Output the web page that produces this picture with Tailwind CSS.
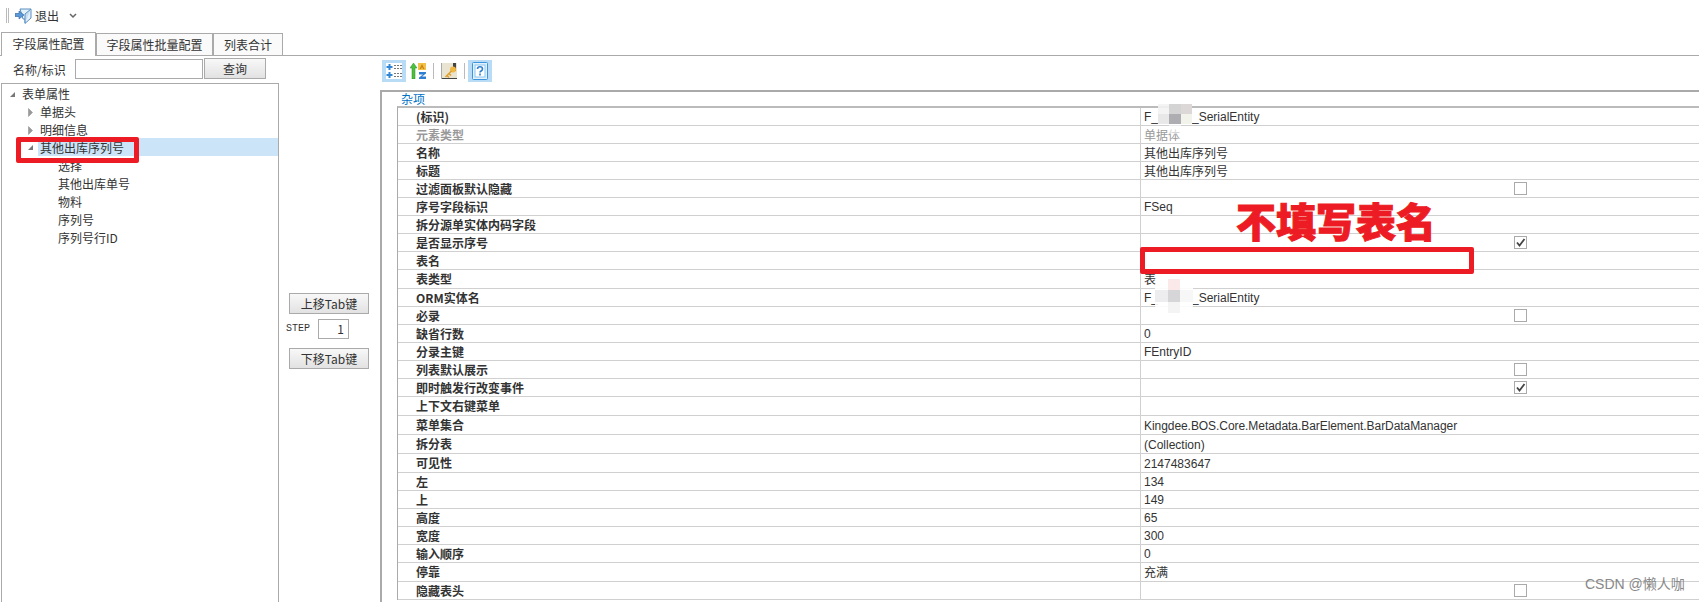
<!DOCTYPE html>
<html lang="zh">
<head>
<meta charset="utf-8">
<script src="https://cdn.jsdelivr.net/npm/@tailwindcss/browser@4"></script>
</head>
<body class="bg-white overflow-hidden">
<div class="relative w-[1699px] h-[602px] overflow-hidden bg-white text-[12px] leading-[18px] text-[#333] font-['Noto_Sans_CJK_SC','Noto_Sans',sans-serif]">

  <!-- top toolbar -->
  <div class="h-[32px] flex items-center pl-[6px] pb-[1px] gap-[4px]">
    <div class="w-[3px] h-[15px] border-x border-[#bbb]"></div>
    <svg class="w-[17px] h-[16px] ml-[2px] mr-[-1px]" viewBox="0 0 17 16">
      <path d="M5 1h11v9l-6 5.500V11H8z" fill="#e4f0fa" stroke="#5b8fc0"/>
      <path d="M10 15V6l6-5" fill="#c5ddf2" stroke="#5b8fc0"/>
      <path d="M0 5.500h4V3l5 4-5 4V8.500H0z" fill="#5a9ad8" stroke="#2c5f9b" stroke-width=".6"/>
    </svg>
    <span class="text-[12px] text-[#333]">退出</span>
    <svg class="w-[8px] h-[6px] ml-[6px]" viewBox="0 0 8 6"><path d="M1 1l3 3 3-3" fill="none" stroke="#666" stroke-width="1.5"/></svg>
  </div>

  <!-- tab strip -->
  <div class="h-[24px] flex items-end border-b border-[#aaa] pl-[1px] relative">
    <div class="w-[95px] h-[24px] border border-b-0 border-[#aaa] bg-white text-center leading-[22px] relative top-[1px] z-10">字段属性配置</div>
    <div class="w-[117px] h-[22px] border border-b-0 border-[#aaa] bg-[#fafafa] text-center leading-[22px]">字段属性批量配置</div>
    <div class="w-[70px] h-[22px] border border-b-0 border-[#aaa] bg-[#fafafa] text-center leading-[22px]">列表合计</div>
  </div>

  <div class="flex h-[546px]">
    <!-- left panel -->
    <div class="w-[279px] shrink-0 flex flex-col">
      <div class="h-[27px] flex items-start pt-[4px]">
        <span class="ml-[13px] w-[62px] leading-[20px]">名称/标识</span>
        <div class="w-[128px] h-[20px] border border-[#aaa] -mt-[1px]"></div>
        <div class="w-[62px] h-[21px] border border-[#aaa] bg-gradient-to-b from-[#f8f8f8] to-[#e2e2e2] text-center leading-[19px] ml-[1px] -mt-[2px]">查询</div>
      </div>
      <div class="flex-1 ml-[1px] border border-[#aaa] border-b-0 pt-[1px] relative">
        <div class="h-[18px] flex items-center pl-[7px] gap-[6px]">
          <svg class="w-[7px] h-[7px]" viewBox="0 0 7 7"><path d="M6 1v5H1z" fill="#777"/></svg><span>表单属性</span>
        </div>
        <div class="h-[18px] flex items-center pl-[26px] gap-[7px]">
          <svg class="w-[5px] h-[9px]" viewBox="0 0 5 9"><path d="M.5.5l4 4-4 4z" fill="#999" stroke="#888" stroke-width=".5"/></svg><span>单据头</span>
        </div>
        <div class="h-[18px] flex items-center pl-[26px] gap-[7px]">
          <svg class="w-[5px] h-[9px]" viewBox="0 0 5 9"><path d="M.5.5l4 4-4 4z" fill="#999" stroke="#888" stroke-width=".5"/></svg><span>明细信息</span>
        </div>
        <div class="h-[18px] -mt-[1px] mb-[1px] flex items-center pl-[25px]">
          <svg class="w-[7px] h-[7px] mr-[4px]" viewBox="0 0 7 7"><path d="M6 1v5H1z" fill="#777"/></svg><span class="bg-[#cce4f7] flex-1 pl-[2px] h-[18px] leading-[20px]">其他出库序列号</span>
        </div>
        <div class="h-[18px] pl-[56px]">选择</div>
        <div class="h-[18px] pl-[56px]">其他出库单号</div>
        <div class="h-[18px] pl-[56px]">物料</div>
        <div class="h-[18px] pl-[56px]">序列号</div>
        <div class="h-[18px] pl-[56px]">序列号行ID</div>
        <!-- red annotation -->
        <div class="absolute left-[14px] top-[53px] w-[123px] h-[26px] border-[5px] border-[#ed1c24] rounded-[2px]"></div>
      </div>
    </div>

    <!-- middle column -->
    <div class="w-[101px] shrink-0 flex flex-col items-start pt-[237px] pl-[10px]">
      <div class="w-[80px] h-[21px] border border-[#aaa] bg-gradient-to-b from-[#f8f8f8] to-[#e2e2e2] text-center leading-[19px]">上移Tab键</div>
      <div class="flex items-start pt-[5px] h-[34px] w-[80px]">
        <span class="w-[32px] -ml-[3px] font-['Liberation_Mono',monospace] text-[10px] leading-[20px]">STEP</span>
        <div class="w-[31px] h-[20px] border border-[#aaa] text-right pr-[4px] leading-[18px]">1</div>
      </div>
      <div class="w-[80px] h-[21px] border border-[#aaa] bg-gradient-to-b from-[#f8f8f8] to-[#e2e2e2] text-center leading-[19px]">下移Tab键</div>
    </div>

    <!-- right panel -->
    <div class="flex-1 flex flex-col min-w-0">
      <div class="h-[34px] flex items-center pt-[1px] pb-[5px]">
        <div class="w-[24px] h-[22px] ml-[2px] bg-[#b8dcf5] flex items-center justify-center">
          <svg class="w-[16px] h-[16px]" viewBox="0 0 16 16">
            <rect x="0" y="0" width="16" height="16" fill="#fff"/>
            <path d="M3.500 1v6M.5 4h6M3.500 9v6M.5 12h6" stroke="#2f86d6" stroke-width="2"/>
            <path d="M8 2.500h8M8 5.500h8M8 10.500h8M8 13.500h8" stroke="#777" stroke-dasharray="2 1"/>
          </svg>
        </div>
        <svg class="w-[16px] h-[16px] ml-[4px]" viewBox="0 0 16 16">
          <path d="M3.500 0L7 5H5v11H2V5H0z" fill="#4cc13c" stroke="#2a8a2a" stroke-width=".5"/>
          <rect x="8" y="0" width="8" height="7" fill="#f2c14a"/>
          <path d="M12 1l-2.500 5h1.500l1-2 1 2h1.500z" fill="#c98512"/>
          <path d="M9 9h7v1.500l-4 3h4V16H9v-1.500l4-3H9z" fill="#2f7fd0"/>
        </svg>
        <div class="w-px h-[16px] bg-[#bbb] ml-[7px]"></div>
        <svg class="w-[16px] h-[16px] ml-[7px]" viewBox="0 0 16 16">
          <rect x="0" y="0" width="16" height="16" fill="#e9e4d2"/>
          <path d="M0 15.500h16" stroke="#444"/>
          <path d="M.5 0v16" stroke="#aaa"/>
          <rect x="12" y="0" width="3" height="8" fill="#444"/>
          <circle cx="12" cy="6.500" r="3" fill="#f0b840"/>
          <path d="M10.500 8l-6 6M6 12.500l2 2M8 10.500l2 2" stroke="#e0a030" stroke-width="1.600" fill="none"/>
        </svg>
        <div class="w-px h-[16px] bg-[#bbb] ml-[7px]"></div>
        <div class="w-[24px] h-[22px] bg-[#b8dcf5] ml-[3px] flex items-center justify-center">
          <svg class="w-[16px] h-[18px]" viewBox="0 0 16 18">
            <rect x=".5" y=".5" width="15" height="17" rx="1" fill="#e2f1fc" stroke="#3d93dc"/>
            <rect x="3" y="3" width="10" height="12" fill="#fff" stroke="#8cc4ee"/>
            <path d="M5.500 7c0-3 5-3 5 0 0 2-2.500 2-2.500 3.500" fill="none" stroke="#2f7fd0" stroke-width="1.600"/>
            <path d="M8 11.500v2" stroke="#2f7fd0" stroke-width="1.600"/>
          </svg>
        </div>
      </div>

      <div class="flex-1 border-l-2 border-t-2 border-[#aaa] flex flex-col">
        <div class="h-[14px] pl-[19px] text-[#0072c6] leading-[14px] shrink-0">杂项</div>
        <div class="ml-[15px] border-l border-t-2 border-[#bbb] border-l-[#aaa]">
          <!-- rows -->
          <div class="grid grid-cols-[742px_1fr] h-[18px] border-b border-[#d0d0d0]"><div class="pl-[18px] font-bold leading-[17px]">(标识)</div><div class="border-l border-[#d0d0d0] pl-[3px] leading-[19px] font-['Liberation_Sans','Noto_Sans_CJK_SC',sans-serif] relative">F_<span class="inline-block w-[34px]"></span>_SerialEntity<div class="absolute z-10 left-[17px] -top-[4px] w-[34px] h-[30px] grid grid-cols-3 grid-rows-3"><span class="bg-[#f3f3f3]/90"></span><span class="bg-[#d4d4d4]"></span><span class="bg-[#dcd8d8]"></span><span class="bg-[#e8e8e8]"></span><span class="bg-[#aeaeb2]"></span><span class="bg-[#f2f4ec]"></span><span></span><span class="bg-white/60"></span><span></span></div></div></div>
          <div class="grid grid-cols-[742px_1fr] h-[18px] border-b border-[#d0d0d0]"><div class="pl-[18px] font-bold leading-[17px] text-[#999]">元素类型</div><div class="border-l border-[#d0d0d0] pl-[3px] leading-[17px] text-[#999]">单据体</div></div>
          <div class="grid grid-cols-[742px_1fr] h-[18px] border-b border-[#d0d0d0]"><div class="pl-[18px] font-bold leading-[17px]">名称</div><div class="border-l border-[#d0d0d0] pl-[3px] leading-[17px]">其他出库序列号</div></div>
          <div class="grid grid-cols-[742px_1fr] h-[18px] border-b border-[#d0d0d0]"><div class="pl-[18px] font-bold leading-[17px]">标题</div><div class="border-l border-[#d0d0d0] pl-[3px] leading-[17px]">其他出库序列号</div></div>
          <div class="grid grid-cols-[742px_1fr] h-[18px] border-b border-[#d0d0d0]"><div class="pl-[18px] font-bold leading-[17px]">过滤面板默认隐藏</div><div class="border-l border-[#d0d0d0] pl-[373px] pt-[2px]"><div class="w-[13px] h-[13px] border border-[#aaa]"></div></div></div>
          <div class="grid grid-cols-[742px_1fr] h-[18px] border-b border-[#d0d0d0]"><div class="pl-[18px] font-bold leading-[17px]">序号字段标识</div><div class="border-l border-[#d0d0d0] pl-[3px] leading-[19px] font-['Liberation_Sans',sans-serif]">FSeq</div></div>
          <div class="grid grid-cols-[742px_1fr] h-[18px] border-b border-[#d0d0d0]"><div class="pl-[18px] font-bold leading-[17px]">拆分源单实体内码字段</div><div class="border-l border-[#d0d0d0]"></div></div>
          <div class="grid grid-cols-[742px_1fr] h-[18px] border-b border-[#d0d0d0]"><div class="pl-[18px] font-bold leading-[17px]">是否显示序号</div><div class="border-l border-[#d0d0d0] pl-[373px] pt-[2px]"><div class="w-[13px] h-[13px] border border-[#aaa] flex items-center justify-center"><svg class="w-[11px] h-[11px]" viewBox="0 0 11 11"><path d="M2 5.500l2.500 3L9.500 2" fill="none" stroke="#444" stroke-width="1.800"/></svg></div></div></div>
          <div class="grid grid-cols-[742px_1fr] h-[18px] border-b border-[#d0d0d0]"><div class="pl-[18px] font-bold leading-[17px]">表名</div><div class="border-l border-[#d0d0d0]"></div></div>
          <div class="grid grid-cols-[742px_1fr] h-[19px] border-b border-[#d0d0d0]"><div class="pl-[18px] font-bold leading-[17px]">表类型</div><div class="border-l border-[#d0d0d0] pl-[3px] leading-[17px]">表</div></div>
          <div class="grid grid-cols-[742px_1fr] h-[18px] border-b border-[#d0d0d0]"><div class="pl-[18px] font-bold leading-[17px]">ORM实体名</div><div class="border-l border-[#d0d0d0] pl-[3px] leading-[19px] font-['Liberation_Sans','Noto_Sans_CJK_SC',sans-serif] relative">F_<span class="inline-block w-[34px]"></span>_SerialEntity<div class="absolute z-10 left-[14px] -top-[10px] w-[38px] h-[34px] grid grid-cols-3 grid-rows-3 rounded-[8px] overflow-hidden"><span class="bg-white/90"></span><span class="bg-[#fbe9e9]"></span><span class="bg-white/90"></span><span class="bg-[#ededf0]"></span><span class="bg-[#d6d6d8]"></span><span class="bg-[#f7f7f7]"></span><span class="bg-white/90"></span><span class="bg-[#f4f4f4]"></span><span class="bg-white/90"></span></div></div></div>
          <div class="grid grid-cols-[742px_1fr] h-[18px] border-b border-[#d0d0d0]"><div class="pl-[18px] font-bold leading-[17px]">必录</div><div class="border-l border-[#d0d0d0] pl-[373px] pt-[2px]"><div class="w-[13px] h-[13px] border border-[#aaa]"></div></div></div>
          <div class="grid grid-cols-[742px_1fr] h-[18px] border-b border-[#d0d0d0]"><div class="pl-[18px] font-bold leading-[17px]">缺省行数</div><div class="border-l border-[#d0d0d0] pl-[3px] leading-[19px] font-['Liberation_Sans',sans-serif]">0</div></div>
          <div class="grid grid-cols-[742px_1fr] h-[18px] border-b border-[#d0d0d0]"><div class="pl-[18px] font-bold leading-[17px]">分录主键</div><div class="border-l border-[#d0d0d0] pl-[3px] leading-[19px] font-['Liberation_Sans',sans-serif]">FEntryID</div></div>
          <div class="grid grid-cols-[742px_1fr] h-[18px] border-b border-[#d0d0d0]"><div class="pl-[18px] font-bold leading-[17px]">列表默认展示</div><div class="border-l border-[#d0d0d0] pl-[373px] pt-[2px]"><div class="w-[13px] h-[13px] border border-[#aaa]"></div></div></div>
          <div class="grid grid-cols-[742px_1fr] h-[18px] border-b border-[#d0d0d0]"><div class="pl-[18px] font-bold leading-[17px]">即时触发行改变事件</div><div class="border-l border-[#d0d0d0] pl-[373px] pt-[2px]"><div class="w-[13px] h-[13px] border border-[#aaa] flex items-center justify-center"><svg class="w-[11px] h-[11px]" viewBox="0 0 11 11"><path d="M2 5.500l2.500 3L9.500 2" fill="none" stroke="#444" stroke-width="1.800"/></svg></div></div></div>
          <div class="grid grid-cols-[742px_1fr] h-[19px] border-b border-[#d0d0d0]"><div class="pl-[18px] font-bold leading-[17px]">上下文右键菜单</div><div class="border-l border-[#d0d0d0]"></div></div>
          <div class="grid grid-cols-[742px_1fr] h-[19px] border-b border-[#d0d0d0]"><div class="pl-[18px] font-bold leading-[18px]">菜单集合</div><div class="border-l border-[#d0d0d0] pl-[3px] leading-[20px] tracking-[-0.06px] font-['Liberation_Sans',sans-serif]">Kingdee.BOS.Core.Metadata.BarElement.BarDataManager</div></div>
          <div class="grid grid-cols-[742px_1fr] h-[19px] border-b border-[#d0d0d0]"><div class="pl-[18px] font-bold leading-[18px]">拆分表</div><div class="border-l border-[#d0d0d0] pl-[3px] leading-[20px] font-['Liberation_Sans',sans-serif]">(Collection)</div></div>
          <div class="grid grid-cols-[742px_1fr] h-[19px] border-b border-[#d0d0d0]"><div class="pl-[18px] font-bold leading-[18px]">可见性</div><div class="border-l border-[#d0d0d0] pl-[3px] leading-[20px] font-['Liberation_Sans',sans-serif]">2147483647</div></div>
          <div class="grid grid-cols-[742px_1fr] h-[18px] border-b border-[#d0d0d0]"><div class="pl-[18px] font-bold leading-[17px]">左</div><div class="border-l border-[#d0d0d0] pl-[3px] leading-[19px] font-['Liberation_Sans',sans-serif]">134</div></div>
          <div class="grid grid-cols-[742px_1fr] h-[18px] border-b border-[#d0d0d0]"><div class="pl-[18px] font-bold leading-[17px]">上</div><div class="border-l border-[#d0d0d0] pl-[3px] leading-[19px] font-['Liberation_Sans',sans-serif]">149</div></div>
          <div class="grid grid-cols-[742px_1fr] h-[18px] border-b border-[#d0d0d0]"><div class="pl-[18px] font-bold leading-[17px]">高度</div><div class="border-l border-[#d0d0d0] pl-[3px] leading-[19px] font-['Liberation_Sans',sans-serif]">65</div></div>
          <div class="grid grid-cols-[742px_1fr] h-[18px] border-b border-[#d0d0d0]"><div class="pl-[18px] font-bold leading-[17px]">宽度</div><div class="border-l border-[#d0d0d0] pl-[3px] leading-[19px] font-['Liberation_Sans',sans-serif]">300</div></div>
          <div class="grid grid-cols-[742px_1fr] h-[18px] border-b border-[#d0d0d0]"><div class="pl-[18px] font-bold leading-[17px]">输入顺序</div><div class="border-l border-[#d0d0d0] pl-[3px] leading-[19px] font-['Liberation_Sans',sans-serif]">0</div></div>
          <div class="grid grid-cols-[742px_1fr] h-[19px] border-b border-[#d0d0d0]"><div class="pl-[18px] font-bold leading-[18px]">停靠</div><div class="border-l border-[#d0d0d0] pl-[3px] leading-[18px]">充满</div></div>
          <div class="grid grid-cols-[742px_1fr] h-[18px] border-b border-[#d0d0d0]"><div class="pl-[18px] font-bold leading-[17px]">隐藏表头</div><div class="border-l border-[#d0d0d0] pl-[373px] pt-[2px]"><div class="w-[13px] h-[13px] border border-[#aaa]"></div></div></div>
        </div>
      </div>
    </div>
  </div>

  <!-- annotations over the grid -->
  <div class="absolute z-20 left-[1140px] top-[247px] w-[334px] h-[27px] border-[5px] border-[#ed1c24] rounded-[2px]"></div>
  <div class="absolute z-20 left-[1236px] top-[195px] text-[#ed1c24] text-[40px] leading-[50px] font-black whitespace-nowrap [-webkit-text-stroke:1px_#ed1c24]">不填写表名</div>
  <div class="absolute z-20 left-[1585px] top-[574px] text-[#888] text-[14px] leading-[20px] font-['Liberation_Sans','Noto_Sans_CJK_SC',sans-serif] whitespace-nowrap">CSDN @懒人咖</div>
</div>
</body>
</html>
